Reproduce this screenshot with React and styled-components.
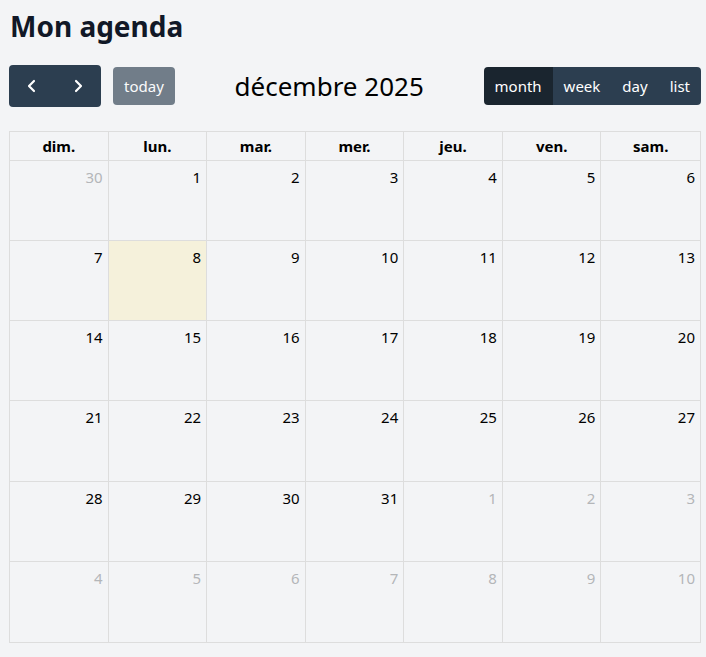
import React from "react";
import styled, { createGlobalStyle } from "styled-components";

const Global = createGlobalStyle`
  html, body { margin: 0; padding: 0; background: #f3f4f6; }
  body { font-family: "Noto Sans", "Open Sans", Arial, sans-serif; color: #111827; }
  * { box-sizing: border-box; }
`;

const Page = styled.div`
  padding: 0 5px 0 9px;
`;

const Title = styled.h1`
  margin: 0;
  padding: 6px 0 0 1px;
  height: 65px;
  font-size: 28px;
  font-weight: 700;
  line-height: 40px;
  color: #111827;
`;

const Toolbar = styled.div`
  display: flex;
  justify-content: space-between;
  align-items: center;
  height: 42px;
  margin-bottom: 24px;
`;

const Chunk = styled.div`
  display: flex;
  align-items: center;
  gap: 12px;
`;

const Group = styled.div`
  display: flex;
  border-radius: 4px;
  overflow: hidden;
`;

const Btn = styled.button`
  border: none;
  margin: 0;
  font-family: inherit;
  font-size: 15px;
  color: #fff;
  background: ${(p) => (p.$active ? "#1a252f" : "#2c3e50")};
  opacity: ${(p) => (p.$disabled ? 0.65 : 1)};
  height: ${(p) => (p.$tall ? "42px" : "38px")};
  padding: ${(p) => (p.$icon ? "0 15px" : "0 11px")};
  border-radius: ${(p) => (p.$solo ? "4px" : "0")};
  display: flex;
  align-items: center;
  justify-content: center;
  line-height: 1;
`;

const MonthTitle = styled.h2`
  margin: 0;
  font-size: 26px;
  font-weight: 400;
  color: #000;
`;

const Calendar = styled.div`
  border: 1px solid #dddddd;
  width: 692px;
`;

const HeadRow = styled.div`
  display: grid;
  grid-template-columns: repeat(7, 1fr);
  height: 29px;
  border-bottom: 1px solid #ddd;
`;

const HeadCell = styled.div`
  display: flex;
  align-items: center;
  justify-content: center;
  font-weight: 700;
  font-size: 15px;
  color: #000;
  border-right: ${(p) => (p.$last ? "none" : "1px solid #ddd")};
`;

const Body = styled.div`
  display: grid;
  grid-template-columns: repeat(7, 1fr);
  grid-template-rows: repeat(6, 1fr);
  height: 481px;
`;

const Day = styled.div`
  border-right: ${(p) => (p.$lastCol ? "none" : "1px solid #ddd")};
  border-bottom: ${(p) => (p.$lastRow ? "none" : "1px solid #ddd")};
  background: ${(p) => (p.$today ? "#f5f1db" : "transparent")};
  display: flex;
  justify-content: flex-end;
  align-items: flex-start;
  padding: 6px 5px 0 0;
  font-size: 15px;
  line-height: 20px;
  color: ${(p) => (p.$other ? "#b4b6b9" : "#000")};
`;

const Chev = ({ dir }) => (
  <svg width="16" height="16" viewBox="0 0 16 16" fill="none" stroke="#fff" strokeWidth="2.2" strokeLinecap="round" strokeLinejoin="round">
    {dir === "l" ? <path d="M10 3 L5 8 L10 13" /> : <path d="M6 3 L11 8 L6 13" />}
  </svg>
);

const heads = ["dim.", "lun.", "mar.", "mer.", "jeu.", "ven.", "sam."];

const days = [];
days.push({ n: 30, other: true });
for (let i = 1; i <= 31; i++) days.push({ n: i, today: i === 8 });
for (let i = 1; i <= 10; i++) days.push({ n: i, other: true });

export default function App() {
  return (
    <Page>
      <Global />
      <Title>Mon agenda</Title>
      <Toolbar>
        <Chunk>
          <Group>
            <Btn $tall $icon aria-label="prev"><Chev dir="l" /></Btn>
            <Btn $tall $icon aria-label="next"><Chev dir="r" /></Btn>
          </Group>
          <Btn $solo $disabled>today</Btn>
        </Chunk>
        <MonthTitle>décembre 2025</MonthTitle>
        <Group>
          <Btn $active>month</Btn>
          <Btn>week</Btn>
          <Btn>day</Btn>
          <Btn>list</Btn>
        </Group>
      </Toolbar>
      <Calendar>
        <HeadRow>
          {heads.map((h, i) => (
            <HeadCell key={h} $last={i === 6}>{h}</HeadCell>
          ))}
        </HeadRow>
        <Body>
          {days.map((d, i) => (
            <Day
              key={i}
              $other={d.other}
              $today={d.today}
              $lastCol={i % 7 === 6}
              $lastRow={i >= 35}
            >
              {d.n}
            </Day>
          ))}
        </Body>
      </Calendar>
    </Page>
  );
}
